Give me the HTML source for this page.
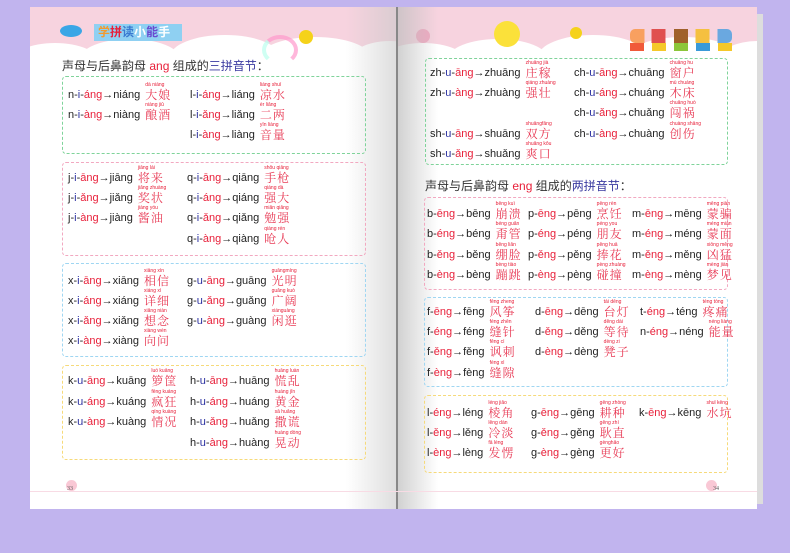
<!DOCTYPE html>
<html><head><meta charset="utf-8"><style>
*{margin:0;padding:0;box-sizing:border-box}
body{width:790px;height:553px;background:#c1b4ee;position:relative;overflow:hidden;font-family:"Liberation Sans","Noto Sans CJK SC",sans-serif}
.pg{position:absolute;background:#fff;overflow:hidden}
.hdr{position:absolute;left:0;right:0;top:0;height:48px;background:#f7d3df}
.cl{position:absolute;background:#fff;border-radius:50%}
.box{position:absolute;border:1px dashed;border-radius:4px}
.r{position:absolute;font-size:11px;color:#222;white-space:nowrap;line-height:14px;height:14px}
.r b{font-weight:normal;color:#2a2fa0}
.r i{font-style:normal;color:#e8203a}
.h{display:inline-block;position:relative;color:#e83a55;font-family:"Noto Serif CJK SC",serif;font-size:12px;line-height:14px;height:14px;letter-spacing:1px;margin-left:2px;vertical-align:top}
.h em{display:block;position:absolute;left:0;top:-6px;font-style:normal;font-size:5px;line-height:6px;font-family:"Liberation Sans",sans-serif;color:#e8203a;white-space:nowrap;letter-spacing:0}
.t{position:absolute;font-size:12px;color:#333;white-space:nowrap}
.t i{font-style:normal;color:#e8203a}.t u{text-decoration:none;color:#3a3aa0}
.dot{position:absolute;width:4px;height:4px;border-radius:50%}
</style></head><body>
<!-- left page -->
<div class="pg" style="left:30px;top:7px;width:366px;height:502px">
 <div class="hdr"></div>
 <div class="cl" style="left:-20px;top:36px;width:90px;height:40px"></div>
 <div class="cl" style="left:50px;top:32px;width:100px;height:40px"></div>
 <div class="cl" style="left:140px;top:28px;width:110px;height:44px"></div>
 <div class="cl" style="left:230px;top:30px;width:110px;height:40px"></div>
 <div class="cl" style="left:320px;top:34px;width:80px;height:40px"></div>
 <div style="position:absolute;left:0;right:0;top:52px;bottom:0;background:#fff"></div>
 <div style="position:absolute;left:30px;top:18px;width:22px;height:12px;background:#3aa6e6;border-radius:50%"></div>
 <div style="position:absolute;left:64px;top:17px;width:88px;height:17px;background:#8fd0f2"></div>
 <div style="position:absolute;left:68px;top:17px;font-size:12px;font-weight:bold;color:#f29a2e;line-height:17px">学<span style="color:#e8203a">拼</span><span style="color:#3a7ad0">读</span><span style="color:#fff">小</span><span style="color:#6a4ad0">能</span><span style="color:#fff">手</span></div>
 <div style="position:absolute;left:232px;top:28px;width:36px;height:30px;border-radius:50%;border:4px solid #f9c;border-bottom-color:transparent;border-left-color:#bfe;opacity:.7"></div>
 <div style="position:absolute;left:269px;top:23px;width:14px;height:14px;border-radius:50%;background:#f5d21a"></div>
 <div class="dot" style="left:36px;bottom:18px;width:11px;height:11px;background:#f9c8d5"></div>
</div>
<div style="position:absolute;left:346px;top:7px;width:50px;height:502px;background:linear-gradient(90deg,rgba(255,255,255,0),rgba(200,200,200,.6))"></div>
<!-- right page -->
<div class="pg" style="left:398px;top:7px;width:359px;height:502px">
 <div class="hdr"></div>
 <div class="cl" style="left:-20px;top:36px;width:90px;height:40px"></div>
 <div class="cl" style="left:50px;top:32px;width:100px;height:40px"></div>
 <div class="cl" style="left:140px;top:28px;width:110px;height:44px"></div>
 <div class="cl" style="left:230px;top:30px;width:110px;height:40px"></div>
 <div class="cl" style="left:320px;top:34px;width:80px;height:40px"></div>
 <div style="position:absolute;left:0;right:0;top:52px;bottom:0;background:#fff"></div>
 <div style="position:absolute;left:96px;top:14px;width:26px;height:26px;border-radius:50%;background:#fbe13a"></div>
 <div style="position:absolute;left:18px;top:22px;width:14px;height:14px;border-radius:50%;background:#f0a8c0"></div>
 <div style="position:absolute;left:172px;top:20px;width:12px;height:12px;border-radius:50%;background:#f5d21a"></div>
 <div style="position:absolute;left:232px;top:36px;width:14px;height:8px;background:#f05a3a"></div>
 <div style="position:absolute;left:254px;top:36px;width:14px;height:8px;background:#f5c82a"></div>
 <div style="position:absolute;left:276px;top:36px;width:14px;height:8px;background:#8cc63a"></div>
 <div style="position:absolute;left:298px;top:36px;width:14px;height:8px;background:#3a9ad8"></div>
 <div style="position:absolute;left:320px;top:36px;width:14px;height:8px;background:#f5c82a"></div>
 <div style="position:absolute;left:232px;top:22px;width:102px;height:14px;background:linear-gradient(90deg,#f8a060 0 14%,transparent 14% 21%,#e05050 21% 35%,transparent 35% 43%,#a0602a 43% 57%,transparent 57% 64%,#f5c040 64% 78%,transparent 78% 86%,#6aa8e0 86%);border-radius:5px"></div>
 <div class="dot" style="left:308px;bottom:18px;width:11px;height:11px;background:#f9c8d5"></div>
</div>
<div style="position:absolute;left:398px;top:7px;width:40px;height:502px;background:linear-gradient(90deg,rgba(190,190,190,.7),rgba(255,255,255,0))"></div>
<div style="position:absolute;left:396px;top:7px;width:2px;height:502px;background:#888"></div>
<div style="position:absolute;left:757px;top:14px;width:6px;height:490px;background:#ddd"></div>
<div style="position:absolute;left:30px;top:491px;width:727px;border-top:1px solid #f8dbe4"></div>
<div style="position:absolute;left:67px;top:486px;font-size:6px;color:#555;font-family:'Liberation Serif',serif">33</div>
<div style="position:absolute;left:713px;top:486px;font-size:6px;color:#555;font-family:'Liberation Serif',serif">34</div>

<!-- LEFT content -->
<div class="t" style="left:62px;top:57px">声母与后鼻韵母 <i>ang</i> 组成的<u>三拼音节</u>：</div>
<div class="box" style="left:62px;top:76px;width:304px;height:78px;border-color:#7fd39a"></div>
<div class="box" style="left:62px;top:162px;width:304px;height:94px;border-color:#f2a8c0"></div>
<div class="box" style="left:62px;top:263px;width:304px;height:94px;border-color:#9fd6f2"></div>
<div class="box" style="left:62px;top:365px;width:304px;height:95px;border-color:#f6da7a"></div>

<div class="r" style="left:68px;top:88px">n-<b>i</b>-<i>áng</i>→niáng <span class="h"><em>dà niáng</em>大娘</span></div>
<div class="r" style="left:68px;top:108px">n-<b>i</b>-<i>àng</i>→niàng <span class="h"><em>niàng jiǔ</em>酿酒</span></div>
<div class="r" style="left:190px;top:88px">l-<b>i</b>-<i>áng</i>→liáng <span class="h"><em>liáng shuǐ</em>凉水</span></div>
<div class="r" style="left:190px;top:108px">l-<b>i</b>-<i>ǎng</i>→liǎng <span class="h"><em>èr liǎng</em>二两</span></div>
<div class="r" style="left:190px;top:128px">l-<b>i</b>-<i>àng</i>→liàng <span class="h"><em>yīn liàng</em>音量</span></div>

<div class="r" style="left:68px;top:171px">j-<b>i</b>-<i>āng</i>→jiāng <span class="h"><em>jiāng lái</em>将来</span></div>
<div class="r" style="left:68px;top:191px">j-<b>i</b>-<i>ǎng</i>→jiǎng <span class="h"><em>jiǎng zhuàng</em>奖状</span></div>
<div class="r" style="left:68px;top:211px">j-<b>i</b>-<i>àng</i>→jiàng <span class="h"><em>jiàng yóu</em>酱油</span></div>
<div class="r" style="left:187px;top:171px">q-<b>i</b>-<i>āng</i>→qiāng <span class="h"><em>shǒu qiāng</em>手枪</span></div>
<div class="r" style="left:187px;top:191px">q-<b>i</b>-<i>áng</i>→qiáng <span class="h"><em>qiáng dà</em>强大</span></div>
<div class="r" style="left:187px;top:211px">q-<b>i</b>-<i>ǎng</i>→qiǎng <span class="h"><em>miǎn qiǎng</em>勉强</span></div>
<div class="r" style="left:187px;top:232px">q-<b>i</b>-<i>àng</i>→qiàng <span class="h"><em>qiàng rén</em>呛人</span></div>

<div class="r" style="left:68px;top:274px">x-<b>i</b>-<i>āng</i>→xiāng <span class="h"><em>xiāng xìn</em>相信</span></div>
<div class="r" style="left:68px;top:294px">x-<b>i</b>-<i>áng</i>→xiáng <span class="h"><em>xiáng xì</em>详细</span></div>
<div class="r" style="left:68px;top:314px">x-<b>i</b>-<i>ǎng</i>→xiǎng <span class="h"><em>xiǎng niàn</em>想念</span></div>
<div class="r" style="left:68px;top:334px">x-<b>i</b>-<i>àng</i>→xiàng <span class="h"><em>xiàng wèn</em>向问</span></div>
<div class="r" style="left:187px;top:274px">g-<b>u</b>-<i>āng</i>→guāng <span class="h"><em>guāngmíng</em>光明</span></div>
<div class="r" style="left:187px;top:294px">g-<b>u</b>-<i>ǎng</i>→guǎng <span class="h"><em>guǎng kuò</em>广阔</span></div>
<div class="r" style="left:187px;top:314px">g-<b>u</b>-<i>àng</i>→guàng <span class="h"><em>xiánguàng</em>闲逛</span></div>

<div class="r" style="left:68px;top:374px">k-<b>u</b>-<i>āng</i>→kuāng <span class="h"><em>luó kuāng</em>箩筐</span></div>
<div class="r" style="left:68px;top:395px">k-<b>u</b>-<i>áng</i>→kuáng <span class="h"><em>fēng kuáng</em>疯狂</span></div>
<div class="r" style="left:68px;top:415px">k-<b>u</b>-<i>àng</i>→kuàng <span class="h"><em>qíng kuàng</em>情况</span></div>
<div class="r" style="left:190px;top:374px">h-<b>u</b>-<i>āng</i>→huāng <span class="h"><em>huāng luàn</em>慌乱</span></div>
<div class="r" style="left:190px;top:395px">h-<b>u</b>-<i>áng</i>→huáng <span class="h"><em>huáng jīn</em>黄金</span></div>
<div class="r" style="left:190px;top:415px">h-<b>u</b>-<i>ǎng</i>→huǎng <span class="h"><em>sā huǎng</em>撒谎</span></div>
<div class="r" style="left:190px;top:436px">h-<b>u</b>-<i>àng</i>→huàng <span class="h"><em>huàng dòng</em>晃动</span></div>

<!-- RIGHT content -->
<div class="box" style="left:425px;top:58px;width:303px;height:107px;border-color:#7fd39a"></div>
<div class="r" style="left:430px;top:66px">zh-<b>u</b>-<i>āng</i>→zhuāng <span class="h"><em>zhuāng jià</em>庄稼</span></div>
<div class="r" style="left:430px;top:86px">zh-<b>u</b>-<i>àng</i>→zhuàng <span class="h"><em>qiáng zhuàng</em>强壮</span></div>
<div class="r" style="left:430px;top:127px">sh-<b>u</b>-<i>āng</i>→shuāng <span class="h"><em>shuāngfāng</em>双方</span></div>
<div class="r" style="left:430px;top:147px">sh-<b>u</b>-<i>ǎng</i>→shuǎng <span class="h"><em>shuǎng kǒu</em>爽口</span></div>
<div class="r" style="left:574px;top:66px">ch-<b>u</b>-<i>āng</i>→chuāng <span class="h"><em>chuāng hu</em>窗户</span></div>
<div class="r" style="left:574px;top:86px">ch-<b>u</b>-<i>áng</i>→chuáng <span class="h"><em>mù chuáng</em>木床</span></div>
<div class="r" style="left:574px;top:106px">ch-<b>u</b>-<i>ǎng</i>→chuǎng <span class="h"><em>chuǎng huò</em>闯祸</span></div>
<div class="r" style="left:574px;top:127px">ch-<b>u</b>-<i>àng</i>→chuàng <span class="h"><em>chuàng shāng</em>创伤</span></div>

<div class="t" style="left:425px;top:177px">声母与后鼻韵母 <i>eng</i> 组成的<u>两拼音节</u>：</div>
<div class="box" style="left:424px;top:197px;width:304px;height:93px;border-color:#f2a8c0"></div>
<div class="box" style="left:424px;top:297px;width:304px;height:90px;border-color:#9fd6f2"></div>
<div class="box" style="left:424px;top:395px;width:304px;height:78px;border-color:#f6da7a"></div>

<div class="r" style="left:427px;top:207px">b-<i>ēng</i>→bēng <span class="h"><em>bēng kuì</em>崩溃</span></div>
<div class="r" style="left:427px;top:227px">b-<i>éng</i>→béng <span class="h"><em>béng guǎn</em>甭管</span></div>
<div class="r" style="left:427px;top:248px">b-<i>ěng</i>→běng <span class="h"><em>běng liǎn</em>绷脸</span></div>
<div class="r" style="left:427px;top:268px">b-<i>èng</i>→bèng <span class="h"><em>bèng tiào</em>蹦跳</span></div>
<div class="r" style="left:528px;top:207px">p-<i>ēng</i>→pēng <span class="h"><em>pēng rèn</em>烹饪</span></div>
<div class="r" style="left:528px;top:227px">p-<i>éng</i>→péng <span class="h"><em>péng you</em>朋友</span></div>
<div class="r" style="left:528px;top:248px">p-<i>ěng</i>→pěng <span class="h"><em>pěng huā</em>捧花</span></div>
<div class="r" style="left:528px;top:268px">p-<i>èng</i>→pèng <span class="h"><em>pèng zhuàng</em>碰撞</span></div>
<div class="r" style="left:632px;top:207px">m-<i>ēng</i>→mēng <span class="h"><em>mēng piàn</em>蒙骗</span></div>
<div class="r" style="left:632px;top:227px">m-<i>éng</i>→méng <span class="h"><em>méng miàn</em>蒙面</span></div>
<div class="r" style="left:632px;top:248px">m-<i>ěng</i>→měng <span class="h"><em>xiōng měng</em>凶猛</span></div>
<div class="r" style="left:632px;top:268px">m-<i>èng</i>→mèng <span class="h"><em>mèng jiàn</em>梦见</span></div>

<div class="r" style="left:427px;top:305px">f-<i>ēng</i>→fēng <span class="h"><em>fēng zheng</em>风筝</span></div>
<div class="r" style="left:427px;top:325px">f-<i>éng</i>→féng <span class="h"><em>féng zhēn</em>缝针</span></div>
<div class="r" style="left:427px;top:345px">f-<i>ěng</i>→fěng <span class="h"><em>fěng cì</em>讽刺</span></div>
<div class="r" style="left:427px;top:366px">f-<i>èng</i>→fèng <span class="h"><em>fèng xì</em>缝隙</span></div>
<div class="r" style="left:535px;top:305px">d-<i>ēng</i>→dēng <span class="h"><em>tái dēng</em>台灯</span></div>
<div class="r" style="left:535px;top:325px">d-<i>ěng</i>→děng <span class="h"><em>děng dài</em>等待</span></div>
<div class="r" style="left:535px;top:345px">d-<i>èng</i>→dèng <span class="h"><em>dèng zi</em>凳子</span></div>
<div class="r" style="left:640px;top:305px">t-<i>éng</i>→téng <span class="h"><em>téng tòng</em>疼痛</span></div>
<div class="r" style="left:640px;top:325px">n-<i>éng</i>→néng <span class="h"><em>néng liàng</em>能量</span></div>

<div class="r" style="left:427px;top:406px">l-<i>éng</i>→léng <span class="h"><em>léng jiǎo</em>棱角</span></div>
<div class="r" style="left:427px;top:426px">l-<i>ěng</i>→lěng <span class="h"><em>lěng dàn</em>冷淡</span></div>
<div class="r" style="left:427px;top:446px">l-<i>èng</i>→lèng <span class="h"><em>fā lèng</em>发愣</span></div>
<div class="r" style="left:531px;top:406px">g-<i>ēng</i>→gēng <span class="h"><em>gēng zhòng</em>耕种</span></div>
<div class="r" style="left:531px;top:426px">g-<i>ěng</i>→gěng <span class="h"><em>gěng zhí</em>耿直</span></div>
<div class="r" style="left:531px;top:446px">g-<i>èng</i>→gèng <span class="h"><em>gènghǎo</em>更好</span></div>
<div class="r" style="left:639px;top:406px">k-<i>ēng</i>→kēng <span class="h"><em>shuǐ kēng</em>水坑</span></div>
</body></html>
